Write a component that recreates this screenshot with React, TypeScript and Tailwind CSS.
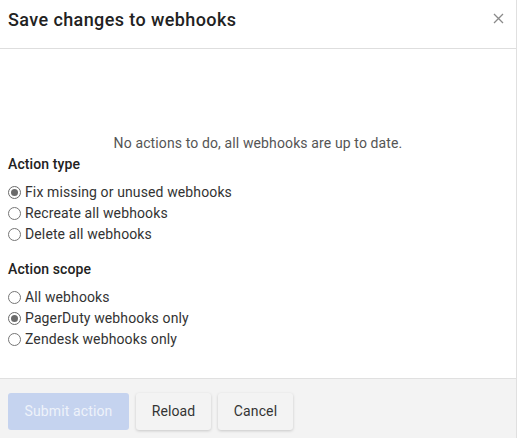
import React, { useState } from "react";

function Radio({ checked, label, onChange }: { checked: boolean; label: string; onChange: () => void }) {
  return (
    <label className="flex items-center h-[21px] cursor-pointer" onClick={onChange}>
      <span
        className={
          "w-[13px] h-[13px] rounded-full border flex items-center justify-center mr-[4px] bg-white " +
          (checked ? "border-[#6b6b6b]" : "border-[#767676]")
        }
      >
        {checked && <span className="w-[7px] h-[7px] rounded-full bg-[#6b6b6b]" />}
      </span>
      <span className="text-[14px] text-[#333] tracking-[0.12px]">{label}</span>
    </label>
  );
}

export default function App() {
  const [type, setType] = useState(0);
  const [scope, setScope] = useState(1);
  return (
    <div className="w-[517px] h-[438px] bg-white flex flex-col border-r border-[#e0e0e0]" style={{ fontFamily: "Roboto, 'Liberation Sans', sans-serif" }}>
      <div className="h-[49px] flex items-center justify-between pl-[8px] pr-[12px] border-b border-[#dedede] shrink-0">
        <h1 className="text-[18px] font-medium text-[#222] pb-[10px] tracking-[0.4px]">Save changes to webhooks</h1>
        <button className="text-[#888] pb-[12px]" aria-label="Close">
          <svg width="11" height="11" viewBox="0 0 11 11">
            <path d="M1 1L10 10M10 1L1 10" stroke="#8a8a8a" strokeWidth="1.3" />
          </svg>
        </button>
      </div>
      <div className="flex-1 px-[8px] pt-[84px]">
        <p className="text-center text-[14px] text-[#555] leading-[20px] tracking-[0.12px]">No actions to do, all webhooks are up to date.</p>
        <div className="text-[14px] font-medium text-[#222] leading-[20px] mt-[1px] mb-[8px] tracking-[0.1px]">Action type</div>
        <Radio checked={type === 0} label="Fix missing or unused webhooks" onChange={() => setType(0)} />
        <Radio checked={type === 1} label="Recreate all webhooks" onChange={() => setType(1)} />
        <Radio checked={type === 2} label="Delete all webhooks" onChange={() => setType(2)} />
        <div className="text-[14px] font-medium text-[#222] leading-[20px] mt-[14px] mb-[8px] tracking-[0.1px]">Action scope</div>
        <Radio checked={scope === 0} label="All webhooks" onChange={() => setScope(0)} />
        <Radio checked={scope === 1} label="PagerDuty webhooks only" onChange={() => setScope(1)} />
        <Radio checked={scope === 2} label="Zendesk webhooks only" onChange={() => setScope(2)} />
      </div>
      <div className="h-[60px] shrink-0 bg-[#f3f3f3] border-t border-[#e0e0e0] flex items-start gap-[7px] pl-[8px] pt-[14px]">
        <button className="h-[37px] w-[121px] rounded-[3px] bg-[#c5d3ef] text-[#eef2fa] text-[14px] tracking-[0.12px]">Submit action</button>
        <button className="h-[37px] w-[75px] rounded-[3px] bg-[#f3f3f3] text-[#333] text-[14px] tracking-[0.12px] shadow-[0_1px_3px_rgba(0,0,0,0.18)]">Reload</button>
        <button className="h-[37px] w-[75px] rounded-[3px] bg-[#f3f3f3] text-[#333] text-[14px] tracking-[0.12px] shadow-[0_1px_3px_rgba(0,0,0,0.18)]">Cancel</button>
      </div>
    </div>
  );
}
